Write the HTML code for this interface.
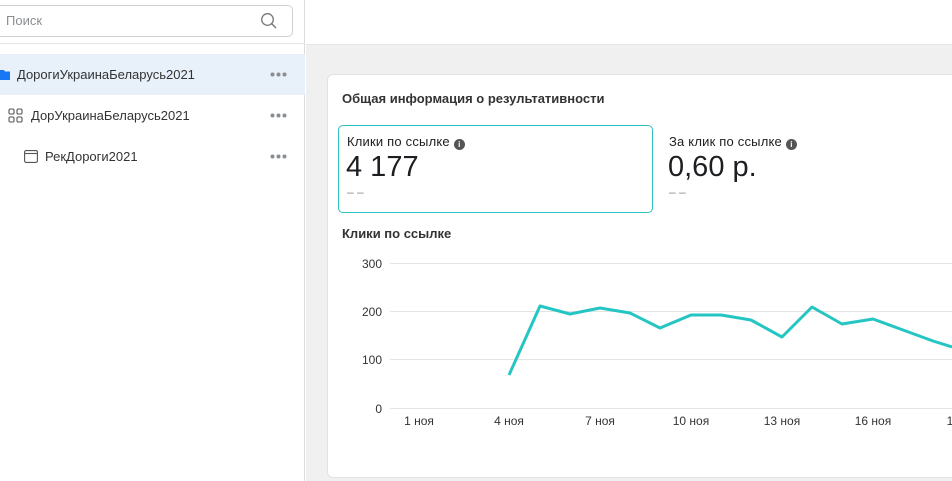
<!DOCTYPE html>
<html><head><meta charset="utf-8"><style>
*{margin:0;padding:0;box-sizing:border-box}
body{width:952px;height:481px;overflow:hidden;background:#fff;font-family:"Liberation Sans",Arial,sans-serif;position:relative;color:#1c1e21}
.abs{position:absolute}
.left{left:0;top:0;width:305px;height:481px;background:#fff;border-right:1px solid #dcdcdc}
.search{left:-6px;top:5px;width:299px;height:32px;border:1px solid #d0d0d0;border-radius:5px}
.search span{position:absolute;left:11px;top:7px;font-size:13px;color:#8a8d91}
.row{left:0;width:305px;height:41px;font-size:13px;color:#333}
.row .t{position:absolute;top:13px}
.dots{position:absolute;left:270px;top:18px}
.right{left:306px;top:0;width:646px;height:481px;background:#f0f0f0}
.top{left:306px;top:0;width:646px;height:45px;background:#fff;border-bottom:1px solid #e8e8e8}
.card{left:327px;top:74px;width:640px;height:404px;background:#fff;border:1px solid #e2e2e2;border-radius:6px}
.h{font-size:13px;font-weight:bold;color:#333}
.kp{left:338px;top:125px;width:315px;height:88px;border:1px solid #2dc2c4;border-radius:5px}
.lbl{font-size:13px;color:#1c1e21;letter-spacing:0.2px}
.big{font-size:29px;color:#1c1e21}
.info{display:inline-block;width:11px;height:11px;border-radius:50%;background:#555;color:#fff;font-size:8px;text-align:center;line-height:11px;font-weight:bold;vertical-align:-1px;margin-left:4px}
</style></head><body>
<div class="abs left"></div>
<div class="abs search"><span>Поиск</span>
<svg class="abs" style="left:265px;top:6px" width="18" height="18" viewBox="0 0 18 18"><circle cx="7.5" cy="7.5" r="5.8" fill="none" stroke="#777" stroke-width="1.3"/><path d="M11.8 11.8L16 16" stroke="#777" stroke-width="1.4"/></svg></div>
<div class="abs" style="left:0;top:43px;width:305px;height:1px;background:#e6e6e6"></div>
<div class="abs row" style="top:54px;background:#e8f0fa">
<svg class="abs" style="left:0;top:15px" width="10" height="11"><path d="M0 1h4l1 1.5h5v8.5H0z" fill="#1877f2"/></svg>
<span class="t" style="left:17px">ДорогиУкраинаБеларусь2021</span><svg class="dots" width="17" height="5"><g fill="#8a8d91"><circle cx="2.5" cy="2.5" r="2"/><circle cx="8.5" cy="2.5" r="2"/><circle cx="14.5" cy="2.5" r="2"/></g></svg></div>
<div class="abs row" style="top:95px">
<svg class="abs" style="left:8px;top:13px" width="15" height="15" viewBox="0 0 15 15" fill="none" stroke="#555" stroke-width="1.1"><rect x="1" y="1" width="5" height="5" rx="1.3"/><rect x="9" y="1" width="5" height="5" rx="1.3"/><rect x="1" y="9" width="5" height="5" rx="1.3"/><rect x="9" y="9" width="5" height="5" rx="1.3"/></svg>
<span class="t" style="left:31px">ДорУкраинаБеларусь2021</span><svg class="dots" width="17" height="5"><g fill="#8a8d91"><circle cx="2.5" cy="2.5" r="2"/><circle cx="8.5" cy="2.5" r="2"/><circle cx="14.5" cy="2.5" r="2"/></g></svg></div>
<div class="abs row" style="top:136px">
<svg class="abs" style="left:24px;top:14px" width="14" height="13" viewBox="0 0 14 13" fill="none" stroke="#555" stroke-width="1.1"><rect x="0.6" y="0.6" width="12.8" height="11.8" rx="1.5"/><path d="M0.6 3.5h12.8"/></svg>
<span class="t" style="left:45px">РекДороги2021</span><svg class="dots" width="17" height="5"><g fill="#8a8d91"><circle cx="2.5" cy="2.5" r="2"/><circle cx="8.5" cy="2.5" r="2"/><circle cx="14.5" cy="2.5" r="2"/></g></svg></div>

<div class="abs right"></div>
<div class="abs top"></div>
<div class="abs card"></div>
<div class="abs h" style="left:342px;top:91px">Общая информация о результативности</div>
<div class="abs kp"></div>
<div class="abs lbl" style="left:347px;top:134px">Клики по ссылке<span class="info">i</span></div>
<div class="abs big" style="left:346px;top:151px">4 177</div>
<div class="abs" style="left:347px;top:185px;color:#888;font-size:12px">– –</div>
<div class="abs lbl" style="left:669px;top:134px">За клик по ссылке<span class="info">i</span></div>
<div class="abs big" style="left:668px;top:151px">0,60 р.</div>
<div class="abs" style="left:669px;top:185px;color:#888;font-size:12px">– –</div>
<div class="abs h" style="left:342px;top:226px">Клики по ссылке</div>

<svg class="abs" style="left:0;top:0" width="952" height="481">
<g stroke="#e3e3e3" stroke-width="1"><path d="M390 263.5H952M390 311.5H952M390 359.5H952M390 408.5H952"/></g>
<g font-family="Liberation Sans,Arial,sans-serif" font-size="12" fill="#333" text-anchor="end">
<text x="382" y="268">300</text><text x="382" y="316">200</text><text x="382" y="364">100</text><text x="382" y="413">0</text></g>
<g font-family="Liberation Sans,Arial,sans-serif" font-size="12" fill="#333" text-anchor="middle">
<text x="419" y="425">1 ноя</text><text x="509" y="425">4 ноя</text><text x="600" y="425">7 ноя</text><text x="691" y="425">10 ноя</text><text x="782" y="425">13 ноя</text><text x="873" y="425">16 ноя</text><text x="950" y="425">1</text></g>
<polyline fill="none" stroke="#25c5c3" stroke-width="3" stroke-linejoin="round" points="509,375 540,306 570,314 600,308 630,313 660,328 691,315 721,315 751,320 782,337 812,307 842,324 873,319 903,330 933,341 952,347"/>
</svg>
</body></html>
